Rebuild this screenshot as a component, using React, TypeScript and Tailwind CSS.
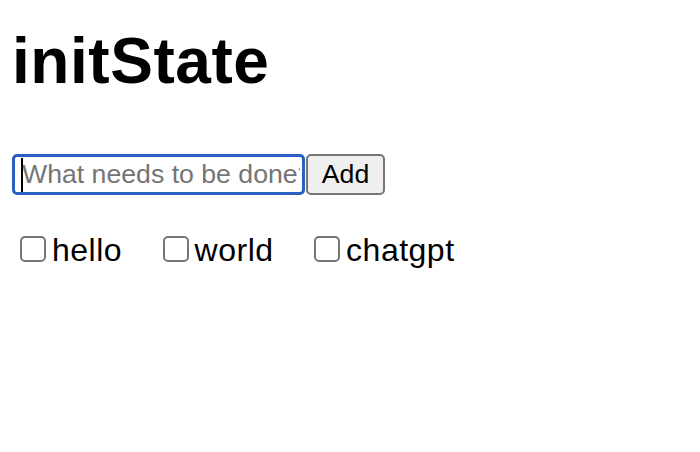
import React from "react";

export default function App() {
  const items = ["hello", "world", "chatgpt"];
  return (
    <div
      className="min-h-[452px] w-[700px] bg-white pl-[12px] pt-[24px] text-black"
      style={{ fontFamily: '"Liberation Sans", Arial, sans-serif' }}
    >
      <h1 className="m-0 text-[64px] font-bold leading-[74px] tracking-[0.55px]">initState</h1>
      <div className="mt-[56px] flex h-[41px] items-stretch">
        <div className="relative h-[41px] w-[293px]">
          <input
            type="text"
            placeholder="What needs to be done?"
            className="box-border h-[41px] w-[293px] rounded-[5px] border-[3px] border-[#2b5fc4] bg-white pl-[7px] pr-[2px] text-[26.67px] leading-[31px] text-black outline-none placeholder:text-[#757575]"
            style={{ fontFamily: '"Liberation Sans", Arial, sans-serif' }}
          />
          <span className="pointer-events-none absolute left-[9px] top-[4px] h-[34px] w-[2px] bg-black" />
        </div>
        <button
          type="button"
          className="ml-[1px] box-border h-[41px] w-[79px] rounded-[5px] border-2 border-[#767676] bg-[#efefef] text-[26.67px] leading-[31px] text-black"
          style={{ fontFamily: '"Liberation Sans", Arial, sans-serif' }}
        >
          Add
        </button>
      </div>
      <div className="mt-[37px] flex items-start pl-[8px]">
        {items.map((t) => (
          <label key={t} className="mr-[40.5px] flex items-start">
            <span className="mt-[4px] box-border h-[26px] w-[26px] rounded-[5px] border-2 border-[#767676] bg-white" />
            <span className="ml-[6px] text-[32px] leading-[37px] tracking-[0.5px]">{t}</span>
          </label>
        ))}
      </div>
    </div>
  );
}
